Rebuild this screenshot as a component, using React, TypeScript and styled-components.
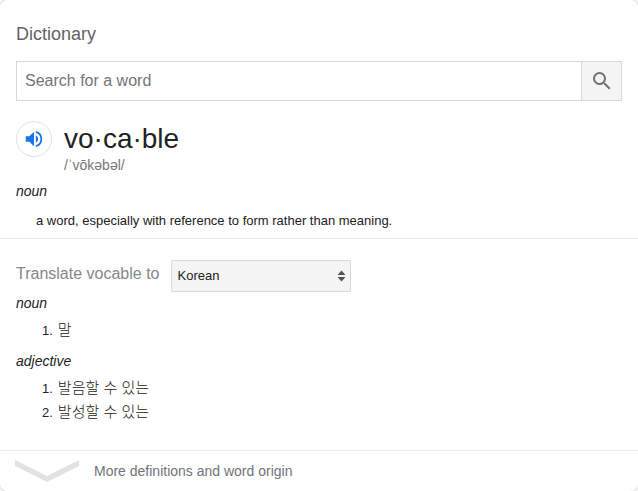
import React from "react";
import styled, { createGlobalStyle } from "styled-components";

const GlobalStyle = createGlobalStyle`
  * { box-sizing: border-box; }
  body { margin: 0; background: #fff; }
`;

const Card = styled.main`
  width: 638px;
  height: 491px;
  display: flex;
  flex-direction: column;
  overflow: hidden;
  background: #fff;
  color: #222;
  font-family: "Liberation Sans", Arial, "Noto Sans CJK KR", sans-serif;
  border-radius: 8px;
  box-shadow: 0 0 0 2px #e8eaec;
`;

const Entry = styled.section`
  height: 239px;
  padding: 22px 16px 0;
  border-bottom: 1px solid #ebebeb;
`;

const Title = styled.h1`
  margin: 0;
  height: 39px;
  font-size: 18px;
  font-weight: 400;
  line-height: 24px;
  color: #5f6368;
`;

const SearchBar = styled.form`
  display: flex;
  height: 40px;
  border: 1px solid #d9d9d9;
`;

const SearchInput = styled.input`
  flex: 1;
  min-width: 0;
  border: 0;
  outline: 0;
  padding: 0 8px;
  font: 16px "Liberation Sans", Arial, sans-serif;
  &::placeholder { color: #757575; opacity: 1; }
`;

const SearchButton = styled.button`
  display: flex;
  align-items: center;
  justify-content: center;
  width: 40px;
  padding: 0;
  border: 0;
  border-left: 1px solid #d9d9d9;
  background: #f4f4f4;
`;

const Headword = styled.div`
  display: flex;
  gap: 12px;
  margin-top: 20px;
  height: 60px;
`;

const AudioButton = styled.button`
  display: flex;
  align-items: center;
  justify-content: center;
  width: 36px;
  height: 36px;
  padding: 0;
  border: 1px solid #dfe1e5;
  border-radius: 50%;
  background: #fff;
`;

const Word = styled.h2`
  margin: 0;
  height: 34px;
  font-size: 28px;
  font-weight: 400;
  line-height: 36px;
`;

const Phonetic = styled.div`
  font-size: 14px;
  line-height: 20px;
  color: #777;
`;

const PartOfSpeech = styled.div`
  font-size: 14px;
  font-style: italic;
  line-height: 20px;
`;

const Definition = styled.p`
  margin: 10px 0 0 20px;
  font-size: 13px;
  line-height: 20px;
`;

const Translation = styled.section`
  height: 212px;
  padding: 21px 16px 0;
  border-bottom: 1px solid #ebebeb;
`;

const TranslateRow = styled.div`
  display: flex;
  gap: 12px;
  height: 33px;
`;

const TranslateLabel = styled.span`
  width: 143px;
  white-space: nowrap;
  font-size: 16px;
  line-height: 28px;
  color: #878787;
`;

const LanguageButton = styled.button`
  display: flex;
  align-items: center;
  justify-content: space-between;
  width: 180px;
  height: 32px;
  padding: 0 4px 1px 5.5px;
  border: 1px solid #d9d9d9;
  border-radius: 1px;
  background: #f4f4f4;
  color: #222;
  font: 13px "Liberation Sans", Arial, sans-serif;
`;

const Meanings = styled.ol`
  margin: 5px 0 9px;
  padding: 0;
  list-style: none;
  font-size: 13px;
`;

const Meaning = styled.li`
  display: flex;
  gap: 5px;
  height: 24px;
  padding-left: 26px;
  line-height: 26px;
`;

const Korean = styled.span`
  font-family: "Noto Sans CJK KR", sans-serif;
  font-weight: 300;
  font-size: 15px;
  line-height: 21px;
`;

const Footer = styled.footer`
  display: flex;
  flex: 1;
  align-items: flex-start;
  gap: 15px;
  padding: 9px 15px 0;
`;

const MoreLink = styled.span`
  font-size: 14px;
  line-height: 22px;
  color: #70757a;
`;

const groups = [
  { part: "noun", items: ["말"] },
  { part: "adjective", items: ["발음할 수 있는", "발성할 수 있는"] },
];

const SearchIcon = () => (
  <svg width="24" height="24" viewBox="0 0 24 24" fill="#70706f">
    <path d="M15.5 14h-.79l-.28-.27A6.47 6.47 0 0 0 16 9.5 6.5 6.5 0 1 0 9.5 16c1.61 0 3.09-.59 4.23-1.57l.27.28v.79l5 4.99L20.49 19zm-6 0A4.5 4.5 0 1 1 14 9.5 4.49 4.49 0 0 1 9.5 14z" />
  </svg>
);

const SpeakerIcon = () => (
  <svg width="22" height="22" viewBox="0 0 24 24" fill="#1a73e8">
    <path d="M3 9v6h4l5 5V4L7 9zm13.5 3A4.5 4.5 0 0 0 14 7.97v8.05A4.5 4.5 0 0 0 16.5 12zM14 3.23v2.06a7 7 0 0 1 0 13.42v2.06a9 9 0 0 0 0-17.54z" />
  </svg>
);

const SortArrows = () => (
  <svg width="9" height="12" viewBox="0 0 9 12" fill="#555">
    <path d="M.5 5 4.5.5 8.5 5zM.5 7h8l-4 4.5z" />
  </svg>
);

const Chevron = () => (
  <svg width="64" height="22" viewBox="0 0 64 22" fill="#e2e2e2">
    <path d="M0 0 32 16 64 0v6L32 22 0 6z" />
  </svg>
);

export default function App() {
  return (
    <>
      <GlobalStyle />
      <Card>
        <Entry>
          <Title>Dictionary</Title>
          <SearchBar onSubmit={(e) => e.preventDefault()}>
            <SearchInput placeholder="Search for a word" />
            <SearchButton aria-label="Search"><SearchIcon /></SearchButton>
          </SearchBar>
          <Headword>
            <AudioButton aria-label="Listen"><SpeakerIcon /></AudioButton>
            <div>
              <Word>vo·ca·ble</Word>
              <Phonetic>/ˈvōkəbəl/</Phonetic>
            </div>
          </Headword>
          <PartOfSpeech>noun</PartOfSpeech>
          <Definition>a word, especially with reference to form rather than meaning.</Definition>
        </Entry>
        <Translation>
          <TranslateRow>
            <TranslateLabel>Translate vocable to</TranslateLabel>
            <LanguageButton>Korean<SortArrows /></LanguageButton>
          </TranslateRow>
          {groups.map((group) => (
            <React.Fragment key={group.part}>
              <PartOfSpeech>{group.part}</PartOfSpeech>
              <Meanings>
                {group.items.map((item, i) => (
                  <Meaning key={item}><span>{i + 1}.</span><Korean lang="ko">{item}</Korean></Meaning>
                ))}
              </Meanings>
            </React.Fragment>
          ))}
        </Translation>
        <Footer>
          <Chevron />
          <MoreLink>More definitions and word origin</MoreLink>
        </Footer>
      </Card>
    </>
  );
}
